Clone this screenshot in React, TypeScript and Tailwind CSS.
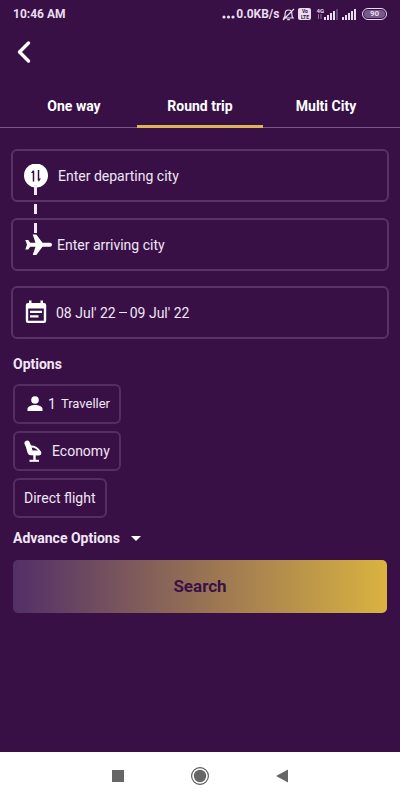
import { useState } from "react";

const TABS = ["One way", "Round trip", "Multi City"];

const FIELD = "flex h-[53px] w-full items-center rounded-md border-2 border-[#583466] text-sm text-[#f1e6f5]";
const CHIP = "flex h-10 items-center rounded-md border-2 border-[#532f62] px-[9px] text-sm text-[#f1e6f5]";

function SignalIcon({ last }: { last: string }) {
  return (
    <svg width="15" height="12" viewBox="0 0 15 12" fill="#eadcf0">
      <rect x="0" y="9" width="2" height="3" />
      <rect x="3" y="7" width="2" height="5" />
      <rect x="6" y="5" width="2" height="7" />
      <rect x="9" y="3" width="2" height="9" />
      <rect x="12" y="1" width="2" height="11" fill={last} />
    </svg>
  );
}

function StatusBar() {
  return (
    <div className="flex h-7 items-center justify-between px-[13px] text-xs font-bold text-[#eadcf0]">
      <span>10:46 AM</span>
      <div className="flex items-center">
        <svg width="15" height="12" viewBox="0 0 15 12" fill="#eadcf0">
          <circle cx="3" cy="9" r="1.600" />
          <circle cx="7.500" cy="9" r="1.600" />
          <circle cx="12" cy="9" r="1.600" />
        </svg>
        <span>0.0KB/s</span>
        <svg className="ml-[3px]" width="13" height="13" viewBox="0 0 13 13" fill="none" stroke="#eadcf0" strokeWidth="1.200">
          <path d="M2 10h9c-1-1-1.200-2-1.200-4.500C9.800 3.500 8.300 2 6.500 2S3.200 3.500 3.200 5.500C3.200 8 3 9 2 10zM5.200 11.700h2.600M1 12L12 1" />
        </svg>
        <span className="ml-[3px] flex h-3 w-[13px] flex-col items-center justify-center rounded-xs bg-[#eadcf0] text-[5px] leading-[6px] text-[#381046]">
          <span>Vo</span>
          <span>LTE</span>
        </span>
        <div className="ml-[5px] flex items-center">
          <div className="flex h-3 flex-col items-center text-[6px] leading-[6px]">
            <span>4G</span>
            <svg width="4" height="5" viewBox="0 0 4 5" stroke="#8f739b" strokeWidth="1">
              <path d="M.5 0v5M3 0v5" />
            </svg>
          </div>
          <SignalIcon last="#67477a" />
        </div>
        <span className="ml-[3px]">
          <SignalIcon last="#eadcf0" />
        </span>
        <span className="ml-[5px] flex h-3 w-[25px] items-center justify-center rounded-full border border-[#eadcf0] p-px text-[8px]">
          <span className="flex h-2 w-full items-center justify-center rounded-full bg-[#76598a]">90</span>
        </span>
      </div>
    </div>
  );
}

function SwapIcon() {
  return (
    <svg width="24" height="24" viewBox="0 0 24 24" fill="none">
      <circle cx="12" cy="11.500" r="12" fill="#fff" />
      <path d="M9.500 17.500V7M14.500 6v10.500" stroke="#381046" strokeWidth="1.500" />
      <path d="M7 9l2.500-3.500V9zM14.500 14.500v3.500L17 14.500z" fill="#381046" />
    </svg>
  );
}

function PlaneIcon() {
  return (
    <svg width="27" height="22" viewBox="0 0 27 22" fill="#fff">
      <path d="M25 8.700H17.500L11.300.500H7.700L10.500 8.700H5.200L3.200 6H.300L2 10.700.300 15.500h2.900L5.200 12.700h5.300L7.700 21h3.600L17.500 12.700H25a2 2 0 0 0 0-4z" />
    </svg>
  );
}

function CalendarIcon() {
  return (
    <svg width="22" height="26" viewBox="0 0 22 26" fill="#fff">
      <path
        fillRule="evenodd"
        d="M4 .500h2.500V3h9V.500H18V3h1a2.200 2.200 0 0 1 2.200 2.200v15.600A2.200 2.200 0 0 1 19 23H3a2.200 2.200 0 0 1-2.200-2.200V5.200A2.200 2.200 0 0 1 3 3h1zM3.200 8.500v12.200h15.600V8.500z"
      />
      <path d="M5 10.800h12V13H5zM5 15.300h8.500v2.200H5z" />
    </svg>
  );
}

function PersonIcon() {
  return (
    <svg width="16" height="16" viewBox="0 0 16 16" fill="#fff">
      <circle cx="8" cy="4" r="3.800" />
      <path d="M.5 15v-2C.5 10.400 5 9.100 8 9.100s7.500 1.300 7.500 3.900v2z" />
    </svg>
  );
}

function SeatIcon() {
  return (
    <svg width="18" height="22" viewBox="0 0 18 22" fill="none" stroke="#fff">
      <path d="M3.200 3.200l1.500 3.500 1.300 5" strokeWidth="5.400" strokeLinecap="round" strokeLinejoin="round" />
      <path d="M6.500 12.800l8.500.200" strokeWidth="4.800" strokeLinecap="round" />
      <path d="M7 6.500c4 0 7 2 8.800 5.200" strokeWidth="1.800" strokeLinecap="round" />
      <path d="M10.500 14.500v6" strokeWidth="2.400" />
      <path d="M5.500 20.800H15" strokeWidth="2" />
    </svg>
  );
}

export default function App() {
  const [tab, setTab] = useState("Round trip");
  const [from, setFrom] = useState("");
  const [to, setTo] = useState("");

  return (
    <div className="flex min-h-screen flex-col bg-[#381046] font-['Roboto',sans-serif]">
      <StatusBar />

      <header className="flex h-12 items-center pl-4">
        <button aria-label="Back">
          <svg width="16" height="24" viewBox="0 0 16 24" fill="none" stroke="#fff" strokeWidth="3.400" strokeLinecap="round" strokeLinejoin="round">
            <path d="M12.500 3L3.500 12l9 9" />
          </svg>
        </button>
      </header>

      <nav className="mt-[9px] flex border-b border-[#79568a] px-[11px]">
        {TABS.map((name) => (
          <button
            key={name}
            onClick={() => setTab(name)}
            className={`-mb-px h-[43px] flex-1 border-b-3 pt-[2px] text-sm font-bold text-white ${tab === name ? "border-[#dcb559]" : "border-transparent"}`}
          >
            {name}
          </button>
        ))}
      </nav>

      <main className="flex flex-col px-[11px] pt-[21px]">
        <div className="relative flex flex-col gap-4">
          <label className={`${FIELD} gap-[10px] pl-[11px]`}>
            <SwapIcon />
            <input
              aria-label="Departing city"
              className="min-w-0 flex-1 bg-transparent outline-none placeholder:text-[#f1e6f5]"
              placeholder="Enter departing city"
              value={from}
              onChange={(e) => setFrom(e.target.value)}
            />
          </label>
          <label className={`${FIELD} gap-[5px] pl-3`}>
            <PlaneIcon />
            <input
              aria-label="Arriving city"
              className="min-w-0 flex-1 bg-transparent outline-none placeholder:text-[#f1e6f5]"
              placeholder="Enter arriving city"
              value={to}
              onChange={(e) => setTo(e.target.value)}
            />
          </label>
          {/* dashes joining the two cities */}
          <div className="pointer-events-none absolute left-[23px] top-[36px] flex flex-col gap-[9px]">
            <span className="h-[10px] w-[3px] bg-[#f1e6f5]" />
            <span className="h-[10px] w-[3px] bg-[#f1e6f5]" />
            <span className="h-[10px] w-[3px] bg-[#f1e6f5]" />
          </div>
        </div>

        <button className={`${FIELD} mt-[15px] gap-[9px] pl-3`}>
          <CalendarIcon />
          <span className="flex items-center gap-[3px]">
            <span>08 Jul' 22</span>
            <span className="h-px w-[8px] bg-[#f1e6f5]" />
            <span>09 Jul' 22</span>
          </span>
        </button>

        <section className="flex flex-col items-start px-[2px] pt-[15px]">
          <h2 className="text-sm font-bold text-[#f1e6f5]">Options</h2>
          <div className="mt-[10px] flex flex-col items-start gap-[7px]">
            <button className={`${CHIP} gap-[5px]`}>
              <span className="pl-[3px]">
                <PersonIcon />
              </span>
              <span className="flex items-center gap-[5px]">
                <span>1</span>
                <span className="text-[13px]">Traveller</span>
              </span>
            </button>
            <button className={`${CHIP} gap-[10px]`}>
              <SeatIcon />
              Economy
            </button>
            <button className={CHIP}>Direct flight</button>
          </div>
          <button className="mt-[10px] flex items-center gap-[11px] text-sm font-bold text-[#f1e6f5]">
            Advance Options
            <svg width="10" height="5" viewBox="0 0 10 5" fill="#fff">
              <path d="M0 0h10L5 5z" />
            </svg>
          </button>
          <button className="mt-3 h-[53px] w-full rounded-[5px] bg-linear-to-r/srgb from-[#522f68] to-[#dab340] text-[17px] font-bold text-[#3b1047]">
            Search
          </button>
        </section>
      </main>

      <footer className="mt-auto flex h-12 items-center justify-center gap-[67px] bg-white">
        <button aria-label="Recent apps">
          <svg width="12" height="12" viewBox="0 0 12 12">
            <path d="M0 0h12v12H0z" fill="#666" />
          </svg>
        </button>
        <button aria-label="Home">
          <svg width="18" height="18" viewBox="0 0 18 18">
            <circle cx="9" cy="9" r="8.400" fill="none" stroke="#555" strokeWidth="1.100" />
            <circle cx="9" cy="9" r="6.200" fill="#666" />
          </svg>
        </button>
        <button aria-label="Back to previous app">
          <svg width="12" height="14" viewBox="0 0 12 14">
            <path d="M12 .5v13L0 7z" fill="#666" />
          </svg>
        </button>
      </footer>
    </div>
  );
}
